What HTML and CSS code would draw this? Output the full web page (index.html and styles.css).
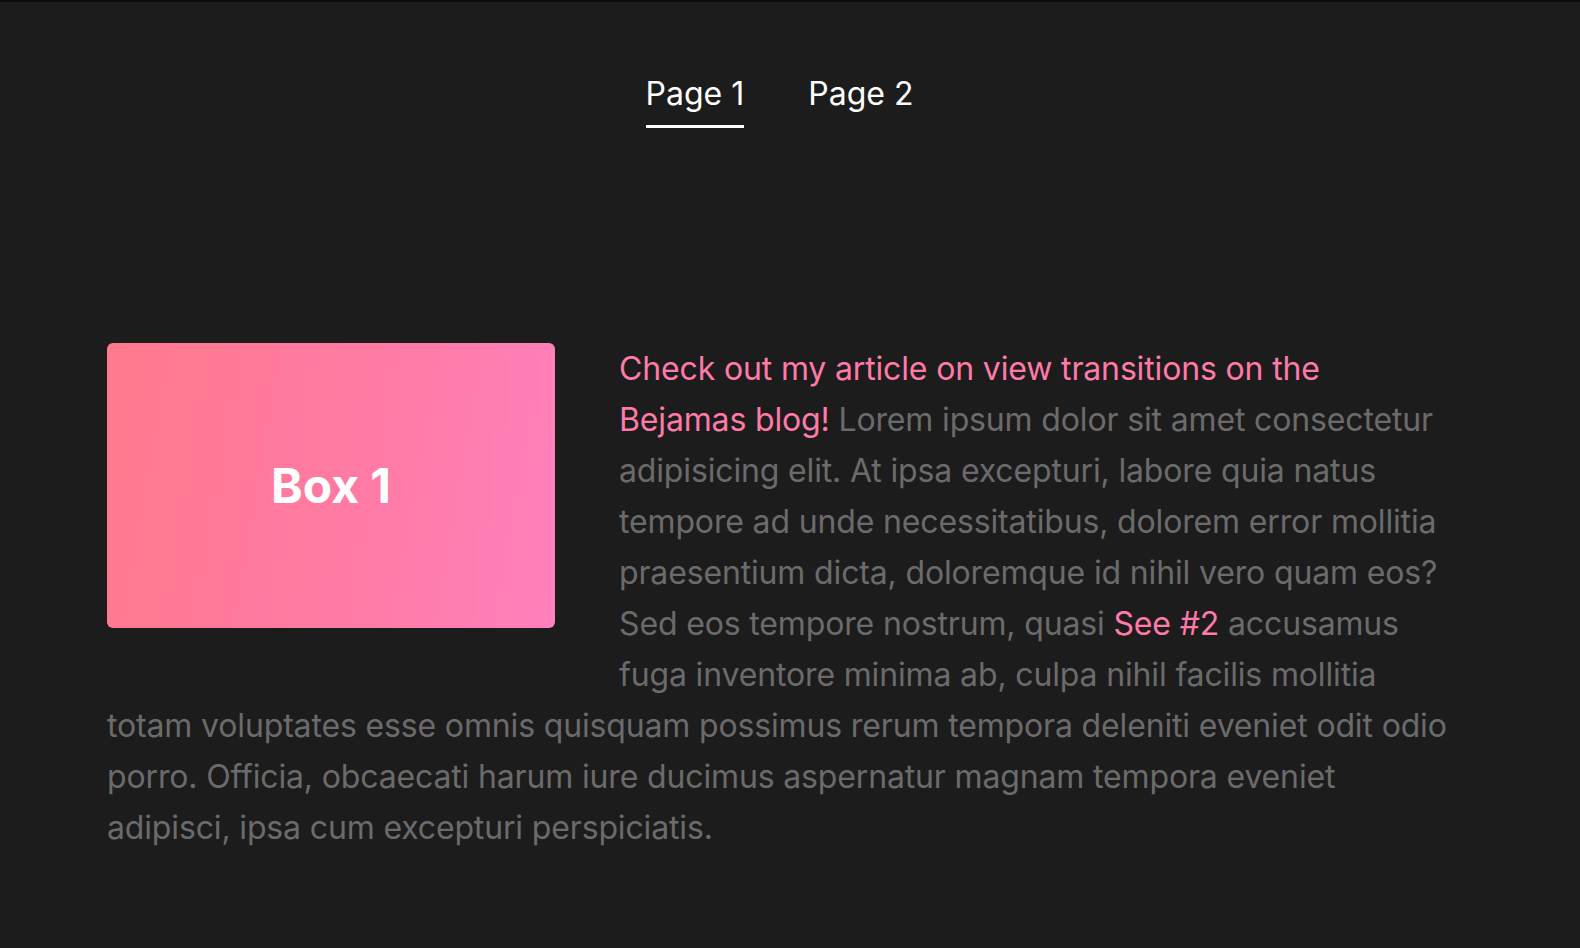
FILE: index.html
```html
<!DOCTYPE html>
<html lang="en">
<head>
  <meta charset="UTF-8" />
  <meta name="viewport" content="width=device-width, initial-scale=1.0"/>
  <title>View Transitions</title>
  <link rel="stylesheet" href="styles.css">
</head>
<body>
  <nav class="nav">
    <a href="#" class="nav-link active">Page 1</a>
    <a href="#" class="nav-link">Page 2</a>
  </nav>

  <main class="content">
    <div class="box">Box 1</div>
    <p class="text">
      <a href="#" class="pink">Check out my article on view transitions on the Bejamas blog!</a>
      Lorem ipsum dolor sit amet consectetur adipisicing elit. At ipsa excepturi, labore quia natus tempore ad unde necessitatibus, dolorem error mollitia praesentium dicta, doloremque id nihil vero quam eos? Sed eos tempore nostrum, quasi <a href="#" class="pink">See #2</a> accusamus fuga inventore minima ab, culpa nihil facilis mollitia totam voluptates esse omnis quisquam possimus rerum tempora deleniti eveniet odit odio porro. Officia, obcaecati harum iure ducimus aspernatur magnam tempora eveniet adipisci, ipsa cum excepturi perspiciatis.
    </p>
  </main>
</body>
</html>
```

FILE: styles.css
```css
* { box-sizing: border-box; margin: 0; padding: 0; }
html, body { height: 100%; overflow: hidden; }
body {
  background: #1c1c1c;
  border-top: 2px solid #0b0b10;
  font-family: Inter, "Liberation Sans", sans-serif;
  color: #6b6b6b;
}
.nav {
  display: flex;
  justify-content: center;
  gap: 64px;
  padding-top: 66px;
  padding-right: 21px;
}
.nav-link {
  display: inline-block;
  color: #fff;
  text-decoration: none;
  font-size: 32px;
  line-height: 51px;
  padding-bottom: 6px;
  border-bottom: 3px solid transparent;
}
.nav-link.active { border-bottom-color: #fff; }
.content {
  width: 1346px;
  margin: 215px 0 0 107px;
}
.box {
  float: left;
  width: 448px;
  height: 285px;
  margin: 0 64px 40px 0;
  border-radius: 6px;
  background: linear-gradient(100deg, #ff7a8c 0%, #ff7a9f 45%, #ff80bc 100%);
  color: #fff;
  font-size: 48px;
  font-weight: bold;
  display: flex;
  justify-content: center;
  align-items: center;
}
.text {
  font-size: 32px;
  line-height: 51px;
  letter-spacing: -0.15px;
}
.pink { color: #ff7aa8; text-decoration: none; }
```
